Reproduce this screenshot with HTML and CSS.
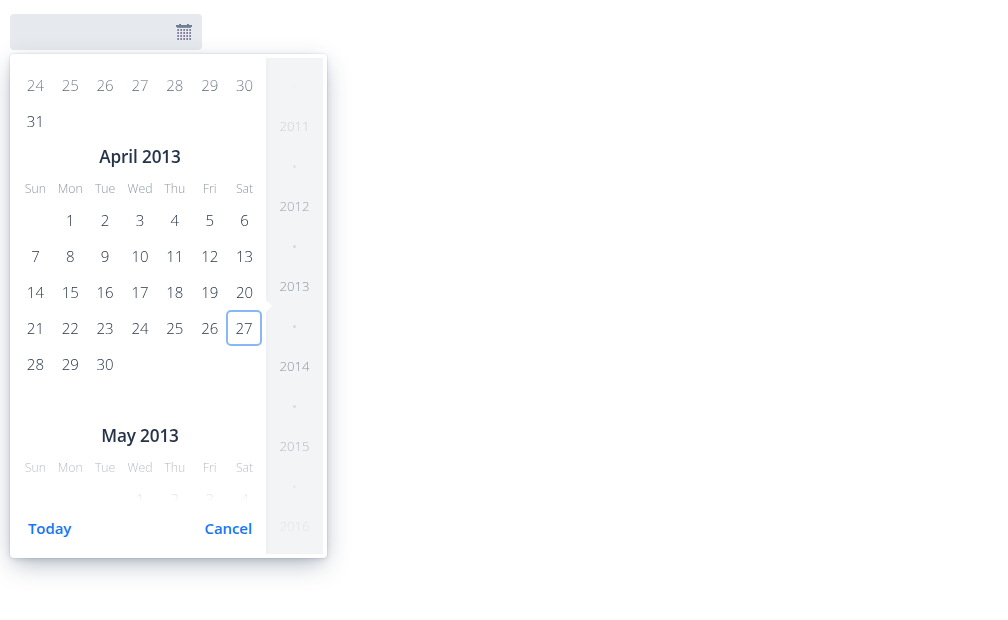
FILE: index.html
```
<!DOCTYPE html>
<html lang="en">
<head>
<meta charset="utf-8">
<title>Date picker</title>
<link rel="stylesheet" href="styles.css">
</head>
<body>
<div class="field">
  <svg class="calendar-icon" width="16" height="17" viewBox="0 0 16 17" shape-rendering="crispEdges">
    <path fill="#737f91" d="M0 2h16v2H0zM3 1h2v1H3zM11 1h2v1h-2z"/>
    <path fill="#8490a0" d="M1 4h14v1H1z"/>
    <g id="cells"></g>
  </svg>
</div>
<div class="overlay">
  <div class="main">
    <div class="months">
      <div class="grid" data-first="0" data-from="24" data-to="31"></div>
      <h2 class="title">April 2013</h2>
      <div class="weekdays"></div>
      <div class="grid april" data-first="1" data-from="1" data-to="30" data-focus="27"></div>
      <h2 class="title">May 2013</h2>
      <div class="weekdays"></div>
      <div class="grid" data-first="3" data-from="1" data-to="4"></div>
    </div>
    <div class="toolbar"><span>Today</span><span>Cancel</span></div>
  </div>
  <div class="years">
    <div class="year-list">
      <i class="dot"></i><span>2011</span><i class="dot"></i><span>2012</span><i class="dot"></i><span>2013</span><i class="dot"></i><span>2014</span><i class="dot"></i><span>2015</span><i class="dot"></i><span>2016</span>
    </div>
  </div>
</div>
<script src="script.js"></script>
</body>
</html>
```
FILE: styles.css
```
* { box-sizing: border-box; }
body {
  margin: 0;
  padding: 14px 10px;
  height: 620px;
  overflow: hidden;
  background: #fff;
  color: #263449;
  font-family: "Open Sans", "Noto Sans", sans-serif;
}
.field {
  width: 192px;
  height: 36px;
  padding: 9px 10px 0 0;
  display: flex;
  justify-content: flex-end;
  border-radius: 4px;
  background: #e6eaee;
}
.overlay {
  width: 317px;
  height: 504px;
  margin-top: 4px;
  padding: 4px;
  display: flex;
  border-radius: 4px;
  background: #fff;
  box-shadow: 0 0 0 1px hsla(214, 61%, 25%, .05), 0 2px 6px -1px hsla(214, 53%, 23%, .16), 0 8px 24px -4px hsla(214, 47%, 21%, .38);
}
.main { width: 252px; }
.months {
  height: 444px;
  padding: 9px 4px 0;
  overflow: hidden;
  -webkit-mask-image: linear-gradient(transparent, #000 42px, #000 calc(100% - 54px), transparent);
  mask-image: linear-gradient(transparent, #000 42px, #000 calc(100% - 54px), transparent);
}
.grid, .weekdays {
  display: grid;
  grid-template-columns: repeat(7, 1fr);
  text-align: center;
}
.grid {
  color: #263449;
  font-size: 15px;
  font-weight: 350;
}
.day {
  height: 36px;
  line-height: 36px;
}
.focused {
  margin-left: -1px;
  border: 2px solid #89b7f8;
  border-radius: 5px;
  line-height: 32px;
}
.weekdays {
  height: 28px;
  line-height: 30px;
  color: #8f98a6;
  font-size: 12.3px;
  font-weight: 350;
}
.april { height: 216px; align-content: start; }
.title {
  height: 35px;
  margin: 0;
  padding-top: 6px;
  line-height: 24px;
  font-size: 17.2px;
  font-weight: 550;
  text-align: center;
  letter-spacing: -.15px;
}
.toolbar {
  height: 52px;
  padding: 0 14px;
  display: flex;
  justify-content: space-between;
  line-height: 52px;
  color: #1676f3;
  font-size: 15px;
  font-weight: 600;
  letter-spacing: -.1px;
}
.years {
  position: relative;
  width: 57px;
  height: 496px;
  background: #f3f4f6;
  box-shadow: inset 3px 0 4px -2px rgba(30, 50, 80, .03);
}
.years::before {
  content: "";
  position: absolute;
  left: 0;
  top: 242px;
  border: 6px solid transparent;
  border-left-color: #fff;
  border-right-width: 0;
}
.year-list {
  display: flex;
  flex-direction: column;
  height: 496px;
  overflow: hidden;
  padding-top: 8px;
  color: #8b95a3;
  font-size: 13.2px;
  font-weight: 350;
  line-height: 40px;
  text-align: center;
  -webkit-mask-image: linear-gradient(transparent 2%, #000 35%, #000 65%, transparent);
  mask-image: linear-gradient(transparent 2%, #000 35%, #000 65%, transparent);
}
.year-list span { height: 40px; flex: none; }
.dot {
  flex: none;
  width: 3px;
  height: 3px;
  margin: 19px auto 18px;
  border-radius: 50%;
  background: #d5d9de;
}
```
FILE: script.js
```
document.querySelectorAll('.weekdays').forEach(function (row) {
  row.innerHTML = ['Sun', 'Mon', 'Tue', 'Wed', 'Thu', 'Fri', 'Sat'].map(function (d) {
    return '<span>' + d + '</span>';
  }).join('');
});
document.querySelectorAll('.grid').forEach(function (grid) {
  var d = grid.dataset, html = '';
  for (var b = 0; b < +d.first; b++) html += '<span></span>';
  for (var n = +d.from; n <= +d.to; n++) {
    html += '<span class="day' + (n === +d.focus ? ' focused' : '') + '">' + n + '</span>';
  }
  grid.innerHTML = html;
});
var cells = '';
for (var r = 0; r < 4; r++) {
  for (var c = 0; c < 5; c++) {
    var x = 1 + c * 3, y = 6 + r * 3;
    cells += '<path fill="#a99ba8" d="M' + x + ' ' + y + 'h1v2h-1z"/><path fill="#7a7fab" d="M' + (x + 1) + ' ' + y + 'h1v2h-1z"/>';
  }
}
document.getElementById('cells').innerHTML = cells;
```
